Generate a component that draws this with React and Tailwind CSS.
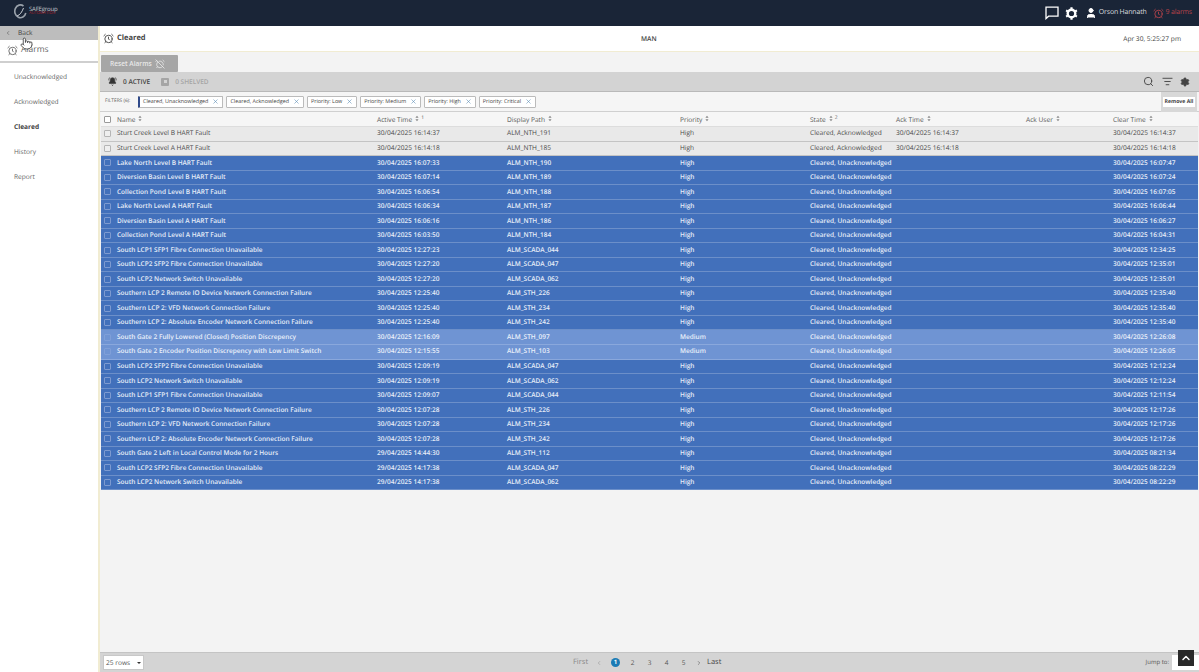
import React from 'react';
import { AlarmClock, AlarmClockOff, BellRing, ChevronLeft, ChevronRight, ChevronUp, ListFilter, Pointer, Search, Settings, User, X } from 'lucide-react';

const FONT = '[font-family:"Open_Sans","Noto_Sans",sans-serif] [text-rendering:geometricPrecision] antialiased';

const ROWS = [
  ['Sturt Creek Level B HART Fault', '30/04/2025 16:14:37', 'ALM_NTH_191', 'High', 'Cleared, Acknowledged', '30/04/2025 16:14:37', '30/04/2025 16:14:37'],
  ['Sturt Creek Level A HART Fault', '30/04/2025 16:14:18', 'ALM_NTH_185', 'High', 'Cleared, Acknowledged', '30/04/2025 16:14:18', '30/04/2025 16:14:18'],
  ['Lake North Level B HART Fault', '30/04/2025 16:07:33', 'ALM_NTH_190', 'High', 'Cleared, Unacknowledged', '', '30/04/2025 16:07:47'],
  ['Diversion Basin Level B HART Fault', '30/04/2025 16:07:14', 'ALM_NTH_189', 'High', 'Cleared, Unacknowledged', '', '30/04/2025 16:07:24'],
  ['Collection Pond Level B HART Fault', '30/04/2025 16:06:54', 'ALM_NTH_188', 'High', 'Cleared, Unacknowledged', '', '30/04/2025 16:07:05'],
  ['Lake North Level A HART Fault', '30/04/2025 16:06:34', 'ALM_NTH_187', 'High', 'Cleared, Unacknowledged', '', '30/04/2025 16:06:44'],
  ['Diversion Basin Level A HART Fault', '30/04/2025 16:06:16', 'ALM_NTH_186', 'High', 'Cleared, Unacknowledged', '', '30/04/2025 16:06:27'],
  ['Collection Pond Level A HART Fault', '30/04/2025 16:03:50', 'ALM_NTH_184', 'High', 'Cleared, Unacknowledged', '', '30/04/2025 16:04:31'],
  ['South LCP1 SFP1 Fibre Connection Unavailable', '30/04/2025 12:27:23', 'ALM_SCADA_044', 'High', 'Cleared, Unacknowledged', '', '30/04/2025 12:34:25'],
  ['South LCP2 SFP2 Fibre Connection Unavailable', '30/04/2025 12:27:20', 'ALM_SCADA_047', 'High', 'Cleared, Unacknowledged', '', '30/04/2025 12:35:01'],
  ['South LCP2 Network Switch Unavailable', '30/04/2025 12:27:20', 'ALM_SCADA_062', 'High', 'Cleared, Unacknowledged', '', '30/04/2025 12:35:01'],
  ['Southern LCP 2 Remote IO Device Network Connection Failure', '30/04/2025 12:25:40', 'ALM_STH_226', 'High', 'Cleared, Unacknowledged', '', '30/04/2025 12:35:40'],
  ['Southern LCP 2: VFD Network Connection Failure', '30/04/2025 12:25:40', 'ALM_STH_234', 'High', 'Cleared, Unacknowledged', '', '30/04/2025 12:35:40'],
  ['Southern LCP 2: Absolute Encoder Network Connection Failure', '30/04/2025 12:25:40', 'ALM_STH_242', 'High', 'Cleared, Unacknowledged', '', '30/04/2025 12:35:40'],
  ['South Gate 2 Fully Lowered (Closed) Position Discrepency', '30/04/2025 12:16:09', 'ALM_STH_097', 'Medium', 'Cleared, Unacknowledged', '', '30/04/2025 12:26:08'],
  ['South Gate 2 Encoder Position Discrepency with Low Limit Switch', '30/04/2025 12:15:55', 'ALM_STH_103', 'Medium', 'Cleared, Unacknowledged', '', '30/04/2025 12:26:05'],
  ['South LCP2 SFP2 Fibre Connection Unavailable', '30/04/2025 12:09:19', 'ALM_SCADA_047', 'High', 'Cleared, Unacknowledged', '', '30/04/2025 12:12:24'],
  ['South LCP2 Network Switch Unavailable', '30/04/2025 12:09:19', 'ALM_SCADA_062', 'High', 'Cleared, Unacknowledged', '', '30/04/2025 12:12:24'],
  ['South LCP1 SFP1 Fibre Connection Unavailable', '30/04/2025 12:09:07', 'ALM_SCADA_044', 'High', 'Cleared, Unacknowledged', '', '30/04/2025 12:11:54'],
  ['Southern LCP 2 Remote IO Device Network Connection Failure', '30/04/2025 12:07:28', 'ALM_STH_226', 'High', 'Cleared, Unacknowledged', '', '30/04/2025 12:17:26'],
  ['Southern LCP 2: VFD Network Connection Failure', '30/04/2025 12:07:28', 'ALM_STH_234', 'High', 'Cleared, Unacknowledged', '', '30/04/2025 12:17:26'],
  ['Southern LCP 2: Absolute Encoder Network Connection Failure', '30/04/2025 12:07:28', 'ALM_STH_242', 'High', 'Cleared, Unacknowledged', '', '30/04/2025 12:17:26'],
  ['South Gate 2 Left in Local Control Mode for 2 Hours', '29/04/2025 14:44:30', 'ALM_STH_112', 'High', 'Cleared, Unacknowledged', '', '30/04/2025 08:21:34'],
  ['South LCP2 SFP2 Fibre Connection Unavailable', '29/04/2025 14:17:38', 'ALM_SCADA_047', 'High', 'Cleared, Unacknowledged', '', '30/04/2025 08:22:29'],
  ['South LCP2 Network Switch Unavailable', '29/04/2025 14:17:38', 'ALM_SCADA_062', 'High', 'Cleared, Unacknowledged', '', '30/04/2025 08:22:29'],
];

const FILTERS = ['Cleared, Unacknowledged', 'Cleared, Acknowledged', 'Priority: Low', 'Priority: Medium', 'Priority: High', 'Priority: Critical'];
const NAV = ['Unacknowledged', 'Acknowledged', 'Cleared', 'History', 'Report'];
const GRID = 'grid grid-cols-[16px_260px_130px_173px_130px_86px_130px_87px_1fr]';

function Sort({ n }) {
  return (
    <span className="ml-[3px] inline-flex items-start">
      <svg width="4" height="7" viewBox="0 0 5 8" className="fill-[#888]">
        <path d="M2.5 0.5 4.5 3H0.5z M2.5 7.5 0.5 5h4z" />
      </svg>
      {n && <span className="ml-[2px] text-[5px] leading-[6px]">{n}</span>}
    </span>
  );
}

function Box({ className }) {
  return <span className={`w-[7px] h-[7px] border rounded-[1px] ${className}`} />;
}

function Row({ row }) {
  const [name, active, path, priority, state, ack, clear] = row;
  const acked = state === 'Cleared, Acknowledged';
  const medium = priority === 'Medium';
  let tone = 'bg-[#4270bb] text-[#e6edf8] font-semibold border-[#6c8fc9] text-[6.5px]';
  if (acked) tone = 'bg-[#e9e9e9] text-[#4a4a4a] border-[#c4c4c4] text-[6.6px]';
  if (medium) tone = 'bg-[#6f94d3] text-[#eaf0fa] font-semibold border-[#8aa8dc] text-[6.5px]';
  return (
    <div className={`${GRID} h-[14.54px] items-center border-b leading-none whitespace-nowrap ${tone}`}>
      <span className="pl-[3px] flex items-center">
        <Box className={acked ? 'border-[#b5b5b5] bg-[#efefef]' : medium ? 'border-[#7f9fd8]' : 'border-[#7d9ad0]'} />
      </span>
      <span>{name}</span>
      <span>{active}</span>
      <span>{path}</span>
      <span>{priority}</span>
      <span>{state}</span>
      <span>{ack}</span>
      <span />
      <span>{clear}</span>
    </div>
  );
}

export default function App() {
  return (
    <div className={`${FONT} w-[1199px] h-[672px] flex flex-col overflow-hidden relative bg-white`}>
      {/* top bar */}
      <header className="h-[26px] shrink-0 bg-[#1a2537] flex items-center text-white">
        <div className="ml-[14px] mb-[4px] flex items-center gap-[2px]">
          <svg width="13" height="15" viewBox="0 0 13 15" fill="none">
            <path d="M9.5 2 A5.6 6.4 0 1 0 11.8 9" stroke="#9aa2ab" strokeWidth="1.6" />
            <path d="M3 12 C6 11 8 8 9.5 4" stroke="#c8cdd3" strokeWidth="1" />
          </svg>
          <div className="flex flex-col leading-none">
            <span className="text-[6px] tracking-[-0.2px] text-[#c4c9cf]">SAFEgroup</span>
            <span className="text-[4px] text-[#a5212a]">AUTOMATION</span>
          </div>
        </div>
        <div className="ml-auto flex items-center">
          <svg width="14" height="14" viewBox="0 0 14 14" fill="none" stroke="white" strokeWidth="1.3">
            <path d="M1 1.2H13V10.2H3.6L1 12.6Z" />
          </svg>
          <svg width="13" height="13" viewBox="0 0 13 13" className="ml-[6px]" fill="none" stroke="white">
            <circle cx="6.5" cy="6.5" r="3.8" strokeWidth="2.4" />
            <path d="M6.5 0.3V2 M6.5 11V12.7 M1.1 3.4 2.6 4.2 M10.4 8.8 11.9 9.6 M1.1 9.6 2.6 8.8 M10.4 4.2 11.9 3.4" strokeWidth="2.2" />
          </svg>
          <User className="w-[12px] h-[12px] ml-[7px] fill-white" />
          <span className="ml-[2px] text-[7px] tracking-[-0.2px] text-[#d6d9dd]">Orson Hannath</span>
          <AlarmClock className="w-[11px] h-[11px] ml-[6px] text-[#b5434a]" />
          <span className="ml-[2px] mr-[7px] text-[7px] tracking-[-0.2px] text-[#b5434a]">9 alarms</span>
        </div>
      </header>

      <div className="flex-1 flex min-h-0">
        {/* left nav */}
        <aside className="w-[98px] shrink-0 flex flex-col bg-white text-[#666]">
          <div className="h-[14px] bg-[#bdbdbd] flex items-center text-[6.6px] text-[#444]">
            <ChevronLeft className="w-[6px] h-[6px] ml-[5px]" />
            <span className="ml-[7px]">Back</span>
          </div>
          <div className="h-[23px] flex items-center gap-[3px] pl-[7px] border-b-2 border-[#cfcfcf] text-[8.5px]">
            <AlarmClock className="w-[11px] h-[11px]" />
            <span>Alarms</span>
          </div>
          <nav className="pt-[1px]">
            {NAV.map((item) => (
              <div key={item} className={`h-[25px] flex items-center pl-[14px] text-[6.6px] ${item === 'Cleared' ? 'font-bold text-[#444]' : ''}`}>
                {item}
              </div>
            ))}
          </nav>
        </aside>

        {/* main */}
        <main className="flex-1 min-w-0 flex flex-col bg-[#f3f3f3] border-l-2 border-[#f1ecd2]">
          <div className="h-[26px] shrink-0 bg-white border-b border-[#f1ecd2] flex items-center relative text-[#444]">
            <AlarmClock className="w-[11px] h-[11px] ml-[3px] mr-[3px]" />
            <span className="text-[7.5px] font-bold">Cleared</span>
            <span className="absolute left-[541px] text-[6.6px] font-semibold">MAN</span>
            <span className="ml-auto mr-[18px] text-[6.6px]">Apr 30, 5:25:27 pm</span>
          </div>
          <div className="h-[20px] shrink-0 pl-[1px] pt-[3px]">
            <button className="h-[17px] w-[77px] bg-[#a6a6a6] rounded-[1px] flex items-center pl-[9px] gap-[3px] text-[6.6px] font-semibold text-[#e8e8e8]">
              Reset Alarms
              <AlarmClockOff className="w-[10px] h-[10px]" />
            </button>
          </div>

          {/* tabs */}
          <div className="h-[20px] shrink-0 bg-[#d3d3d3] border-b border-[#b9b9b9] flex items-center text-[6.5px] text-[#444]">
            <BellRing className="w-[9px] h-[9px] ml-[8px] fill-[#333]" />
            <span className="ml-[6px] font-semibold">0 ACTIVE</span>
            <span className="ml-[11px] w-[8px] h-[8px] bg-[#a5a5a5] rounded-[1px] flex items-center justify-center">
              <span className="w-[3px] h-[3px] bg-[#d3d3d3]" />
            </span>
            <span className="ml-[6px] text-[#a5a5a5] font-semibold">0 SHELVED</span>
            <Search className="w-[11px] h-[11px] ml-auto" strokeWidth={2} />
            <ListFilter className="w-[11px] h-[11px] ml-[8px]" strokeWidth={2} />
            <Settings className="w-[10px] h-[10px] ml-[7px] mr-[9px] fill-[#444]" />
          </div>

          {/* filters */}
          <div className="h-[20px] shrink-0 bg-[#f5f5f5] border-b border-[#d0d0d0] flex items-center">
            <span className="ml-[5px] w-[33px] text-[4.8px] text-[#555]">FILTERS (6):</span>
            <div className="flex gap-[3px]">
              {FILTERS.map((f, i) => (
                <span key={f} className={`h-[12px] flex items-center gap-[4px] px-[3px] bg-white border border-[#bbb] rounded-[1px] text-[5.4px] text-[#444] ${i === 0 ? 'border-l-2 border-l-[#2f4a8a]' : ''}`}>
                  {f}
                  <X className="w-[7px] h-[7px] text-[#5d8db5]" />
                </span>
              ))}
            </div>
            <div className="ml-auto mr-[2px] w-[36px] h-[20px] bg-[#d8d8d8] flex items-center justify-center">
              <span className="bg-white px-[2px] h-[10px] flex items-center text-[5.2px] font-bold text-[#444] whitespace-nowrap">Remove All</span>
            </div>
          </div>

          {/* table */}
          <div className="flex-1 min-h-0 ml-[1px] mr-[1px]">
            <div className={`${GRID} h-[15px] pt-[1px] bg-[#f6f6f6] items-center text-[6.6px] text-[#555] whitespace-nowrap border-b border-[#ddd]`}>
              <span className="pl-[3px] flex items-center"><Box className="border-[#999] bg-white" /></span>
              <span>Name<Sort /></span>
              <span>Active Time<Sort n="1" /></span>
              <span>Display Path<Sort /></span>
              <span>Priority<Sort /></span>
              <span>State<Sort n="2" /></span>
              <span>Ack Time<Sort /></span>
              <span>Ack User<Sort /></span>
              <span>Clear Time<Sort /></span>
            </div>
            {ROWS.map((row, i) => (
              <Row key={i} row={row} />
            ))}
          </div>

          {/* pager */}
          <div className="h-[20px] shrink-0 bg-[#d4d4d4] border-t border-[#c4c4c4] flex items-center relative text-[#555]">
            <div className="ml-[3px] w-[41px] h-[15px] bg-white border border-[#c8c8c8] flex items-center justify-between px-[2px] text-[6.6px]">
              25 rows
              <span className="w-0 h-0 border-x-[2px] border-x-transparent border-t-[2px] border-t-[#333]" />
            </div>
            <div className="absolute left-[473px] flex items-center text-[6.5px]">
              <span className="w-[23px] text-[7.5px] text-[#888]">First</span>
              <ChevronLeft className="w-[6px] h-[6px] text-[#888]" />
              <span className="ml-[9px] w-[9px] h-[9px] rounded-full bg-[#1b7bb5] text-white flex items-center justify-center text-[6px] font-bold">1</span>
              <span className="w-[17px] text-center ml-[4px]">2</span>
              <span className="w-[17px] text-center">3</span>
              <span className="w-[17px] text-center">4</span>
              <span className="w-[17px] text-center">5</span>
              <ChevronRight className="w-[6px] h-[6px] ml-[4px] text-[#444]" />
              <span className="ml-[5px] text-[7.5px] text-[#444]">Last</span>
            </div>
            <span className="ml-auto mr-[3px] text-[6px]">Jump to:</span>
            <span className="w-[27px] h-[15px] bg-white" />
          </div>
        </main>
      </div>

      {/* floats over the page */}
      <Pointer className="absolute left-[20px] top-[36px] w-[13px] h-[15px] text-[#333] fill-white" strokeWidth={1.5} />
      <div className="absolute right-[5px] bottom-[6px] w-[16px] h-[16px] bg-[#2a2a2a] flex items-center justify-center">
        <ChevronUp className="w-[12px] h-[12px] text-white" strokeWidth={3} />
      </div>
    </div>
  );
}
